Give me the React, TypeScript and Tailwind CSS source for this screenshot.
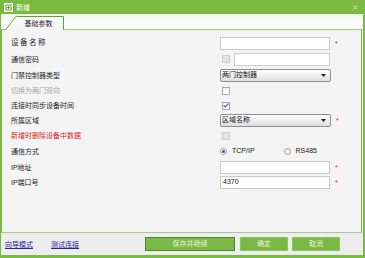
import React from "react";

const FONT = "font-['Liberation_Sans','Noto_Sans_CJK_SC',sans-serif]";

function Star() {
  return <span className="ml-[5px] self-start pt-[3px] text-[7px] leading-none text-[#e0282e]">*</span>;
}

function TextBox({ value, className = "" }: { value?: string; className?: string }) {
  return (
    <div
      className={`flex h-[13px] items-center border border-[#c9c9c9] bg-white pl-[2px] text-[7px] text-[#222] ${className}`}
    >
      {value}
    </div>
  );
}

function Select({ value }: { value: string }) {
  return (
    <div className="flex h-[13px] w-[111px] items-center justify-between rounded-[2px] border border-[#8f8f8f] bg-gradient-to-b from-white to-[#dedede] pl-[1px] pr-[4px] text-[7px] text-[#111]">
      <span>{value}</span>
      <svg width="5" height="3" viewBox="0 0 5 3">
        <path d="M0 0h5L2.5 3z" fill="#222" />
      </svg>
    </div>
  );
}

function Check({ checked = false, disabled = false }: { checked?: boolean; disabled?: boolean }) {
  return (
    <div
      className={`ml-[2px] flex h-[8px] w-[8px] items-center justify-center border ${
        disabled ? "border-[#cfcfcf] bg-[#e4e4e4]" : "border-[#a9a9a9] bg-gradient-to-b from-[#f0f0f0] to-white"
      }`}
    >
      {checked && (
        <svg width="6" height="5" viewBox="0 0 6 5">
          <path d="M0.6 2.4 2.3 4 5.4 0.6" fill="none" stroke="#2f5fb0" strokeWidth="1.1" />
        </svg>
      )}
    </div>
  );
}

function Radio({ checked, label }: { checked?: boolean; label: string }) {
  return (
    <div className="flex items-center">
      <div className="flex h-[7px] w-[7px] items-center justify-center rounded-full border border-[#9a9a9a] bg-gradient-to-b from-[#eaeaea] to-white">
        {checked && <div className="h-[3px] w-[3px] rounded-full bg-[#2a5aa8]" />}
      </div>
      <span className="ml-[5px] text-[7px] text-[#222]">{label}</span>
    </div>
  );
}

function Row({
  label,
  h,
  tone = "normal",
  size = "text-[7px]",
  children,
}: {
  label: string;
  h: string;
  tone?: "normal" | "muted" | "red";
  size?: string;
  children?: React.ReactNode;
}) {
  const color = tone === "muted" ? "text-[#a4a4a4]" : tone === "red" ? "text-[#d6242a]" : "text-[#1e1e1e]";
  return (
    <div className={`flex items-center ${h}`}>
      <div className={`w-[218px] pl-[9px] leading-none ${size} ${color}`}>{label}</div>
      <div className="flex items-center">{children}</div>
    </div>
  );
}

export default function App() {
  return (
    <div className={`flex h-[258px] w-[365px] flex-col bg-[#7aba40] ${FONT}`}>
      {/* title bar */}
      <div className="flex h-[14px] shrink-0 items-center justify-between pl-[4px] pr-[7px]">
        <div className="flex items-center">
          <svg width="9" height="9" viewBox="0 0 9 9">
            <rect x="0.5" y="0.5" width="8" height="8" fill="#f4f9ee" stroke="#ffffff" />
            <rect x="2" y="2" width="5" height="5" fill="none" stroke="#5c9a2c" strokeWidth="0.9" />
            <path d="M3 4.5h3M4.5 3v3" stroke="#5c9a2c" strokeWidth="0.9" />
          </svg>
          <span className="ml-[3px] text-[7px] leading-none text-white">新增</span>
        </div>
        <svg width="5" height="5" viewBox="0 0 5 5">
          <path d="M0.5 0.5 4.5 4.5M4.5 0.5 0.5 4.5" stroke="#cfe8b8" strokeWidth="1" />
        </svg>
      </div>

      {/* window body */}
      <div className="mb-[3px] ml-[1px] mr-[2px] flex flex-1 flex-col bg-[#ededed]">
        {/* tab strip */}
        <div className="flex h-[15px] shrink-0 items-end bg-gradient-to-b from-[#f2f8ee] to-white pl-[4px]">
          <div className="relative z-10 -mb-[1px] flex h-[14px] w-[59px] items-center justify-center pl-[8px]">
            <svg className="absolute inset-0" width="59" height="14" viewBox="0 0 59 14">
              <defs>
                <linearGradient id="tabg" x1="0" y1="0" x2="0" y2="1">
                  <stop offset="0" stopColor="#ffffff" />
                  <stop offset="1" stopColor="#f3f3f3" />
                </linearGradient>
              </defs>
              <path d="M0.5 14 L10 1.5 Q11 0.5 12.5 0.5 H58.5 V14" fill="url(#tabg)" stroke="#5da62c" />
            </svg>
            <span className="relative text-[7px] leading-none text-[#1e1e1e]">基础参数</span>
          </div>
        </div>

        {/* form panel */}
        <div className="mr-[1px] flex flex-1 flex-col border-l-[1px] border-r-[1px] border-t border-b border-l-[#78b844] border-r-[#78b844] border-t-[#9bcc78] border-b-[#a8c894] bg-[#f4f4f4] pt-[5px]">
          <Row label="设备名称" h="h-[16px]" size="text-[7.5px] tracking-[1.5px]">
            <TextBox className="w-[110px]" />
            <Star />
          </Row>
          <Row label="通信密码" h="h-[16px]">
            <Check disabled />
            <TextBox className="ml-[4px] w-[96px] border-[#d0d0d0] bg-[#ececec]" />
          </Row>
          <Row label="门禁控制器类型" h="h-[16px]">
            <Select value="两门控制器" />
          </Row>
          <Row label="切换为两门双向" h="h-[15px]" tone="muted">
            <Check />
          </Row>
          <Row label="连接时同步设备时间" h="h-[15px]">
            <Check checked />
          </Row>
          <Row label="所属区域" h="h-[15px]">
            <Select value="区域名称" />
            <Star />
          </Row>
          <Row label="新增时删除设备中数据" h="h-[15px]" tone="red">
            <Check disabled />
          </Row>
          <Row label="通信方式" h="h-[16px]">
            <Radio checked label="TCP/IP" />
            <div className="ml-[29px]">
              <Radio label="RS485" />
            </div>
          </Row>
          <Row label="IP地址" h="h-[16px]">
            <TextBox className="w-[110px]" />
            <Star />
          </Row>
          <Row label="IP端口号" h="h-[15px]">
            <TextBox className="w-[110px]" value="4370" />
            <Star />
          </Row>
        </div>

        {/* footer */}
        <div className="flex h-[22px] shrink-0 items-center pl-[4px]">
          <a className="text-[7px] leading-none text-[#24249c] underline">向导模式</a>
          <a className="ml-[18px] text-[7px] leading-none text-[#24249c] underline">测试连接</a>
          <button className="ml-[66px] flex h-[14px] w-[90px] items-center justify-center border border-[#4d8a25] bg-[#7ab944] text-[7px] text-[#e6f3da]">
            保存并继续
          </button>
          <button className="ml-[5px] flex h-[14px] w-[48px] items-center justify-center border border-[#8cc660] bg-[#7ab944] text-[7px] text-[#e6f3da]">
            确定
          </button>
          <button className="ml-[4px] flex h-[14px] w-[48px] items-center justify-center border border-[#8cc660] bg-[#7ab944] text-[7px] text-[#e6f3da]">
            取消
          </button>
        </div>
      </div>
    </div>
  );
}
